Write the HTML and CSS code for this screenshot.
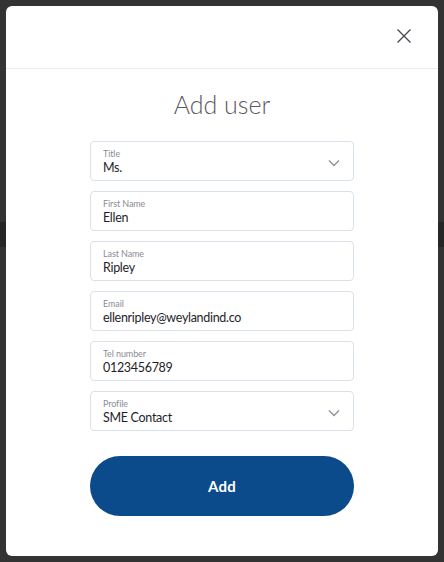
FILE: index.html
```html
<!DOCTYPE html>
<html>
<head>
<meta charset="utf-8">
<link rel="stylesheet" href="styles.css">
</head>
<body>
<div class="modal">
  <div class="modal-header">
    <button class="close" aria-label="Close">
      <svg width="16" height="16" viewBox="0 0 16 16"><path d="M1.5 1.5 L14.5 14.5 M14.5 1.5 L1.5 14.5" stroke="#4a4a55" stroke-width="1.4" fill="none"/></svg>
    </button>
  </div>
  <div class="modal-body">
    <h1 class="title">Add user</h1>
    <form class="form">
      <div class="field select">
        <div class="field-text"><span class="label">Title</span><span class="value">Ms.</span></div>
        <svg class="chev" width="12" height="8" viewBox="0 0 12 8"><path d="M1 1.5 L6 6.5 L11 1.5" stroke="#8a93a0" stroke-width="1.4" fill="none"/></svg>
      </div>
      <div class="field">
        <div class="field-text"><span class="label">First Name</span><span class="value">Ellen</span></div>
      </div>
      <div class="field">
        <div class="field-text"><span class="label">Last Name</span><span class="value">Ripley</span></div>
      </div>
      <div class="field">
        <div class="field-text"><span class="label">Email</span><span class="value">ellenripley@weylandind.co</span></div>
      </div>
      <div class="field">
        <div class="field-text"><span class="label">Tel number</span><span class="value">0123456789</span></div>
      </div>
      <div class="field select">
        <div class="field-text"><span class="label">Profile</span><span class="value">SME Contact</span></div>
        <svg class="chev" width="12" height="8" viewBox="0 0 12 8"><path d="M1 1.5 L6 6.5 L11 1.5" stroke="#8a93a0" stroke-width="1.4" fill="none"/></svg>
      </div>
      <button type="button" class="add-btn">Add</button>
    </form>
  </div>
</div>
</body>
</html>
```
FILE: styles.css
```css
html, body {
  margin: 0;
  padding: 0;
}
body {
  width: 444px;
  height: 562px;
  overflow: hidden;
  background:
    linear-gradient(to bottom, transparent 222px, #262626 222px, #262626 247px, transparent 247px),
    #333333;
  font-family: "Lato", "Open Sans", sans-serif;
  padding: 6px;
  box-sizing: border-box;
}
.modal {
  width: 432px;
  height: 550px;
  background: #fff;
  border-radius: 6px;
  display: flex;
  flex-direction: column;
}
.modal-header {
  height: 63px;
  border-bottom: 1px solid #ececec;
  display: flex;
  align-items: center;
  justify-content: flex-end;
  padding-right: 26px;
  box-sizing: border-box;
  flex-shrink: 0;
}
.close {
  border: 0;
  background: none;
  padding: 0;
  width: 16px;
  height: 16px;
  margin-top: -2px;
  display: flex;
}
.modal-body {
  display: flex;
  flex-direction: column;
  align-items: center;
}
.title {
  margin: 20px 0 0;
  font-size: 25px;
  line-height: 30px;
  font-weight: 300;
  color: #5a5a64;
  height: 52px;
}
.form {
  width: 264px;
  display: flex;
  flex-direction: column;
  gap: 10px;
}
.field {
  height: 40px;
  box-sizing: border-box;
  border: 1px solid #d9e2ec;
  border-radius: 4px;
  padding: 6px 12px 0;
  display: flex;
  align-items: flex-start;
  justify-content: space-between;
}
.field-text {
  display: flex;
  flex-direction: column;
}
.label {
  font-size: 9px;
  line-height: 12px;
  color: #8c8c94;
  letter-spacing: -0.1px;
}
.value {
  font-size: 12.5px;
  line-height: 16px;
  color: #1e1e2a;
  letter-spacing: -0.3px;
}
.chev {
  margin-top: 11px;
  margin-right: 1px;
}
.add-btn {
  margin-top: 15px;
  height: 60px;
  border: 0;
  border-radius: 30px;
  background: #0b4a8b;
  color: #fff;
  font-family: "Lato", sans-serif;
  font-weight: 700;
  font-size: 15px;
  letter-spacing: 0.3px;
}
```
